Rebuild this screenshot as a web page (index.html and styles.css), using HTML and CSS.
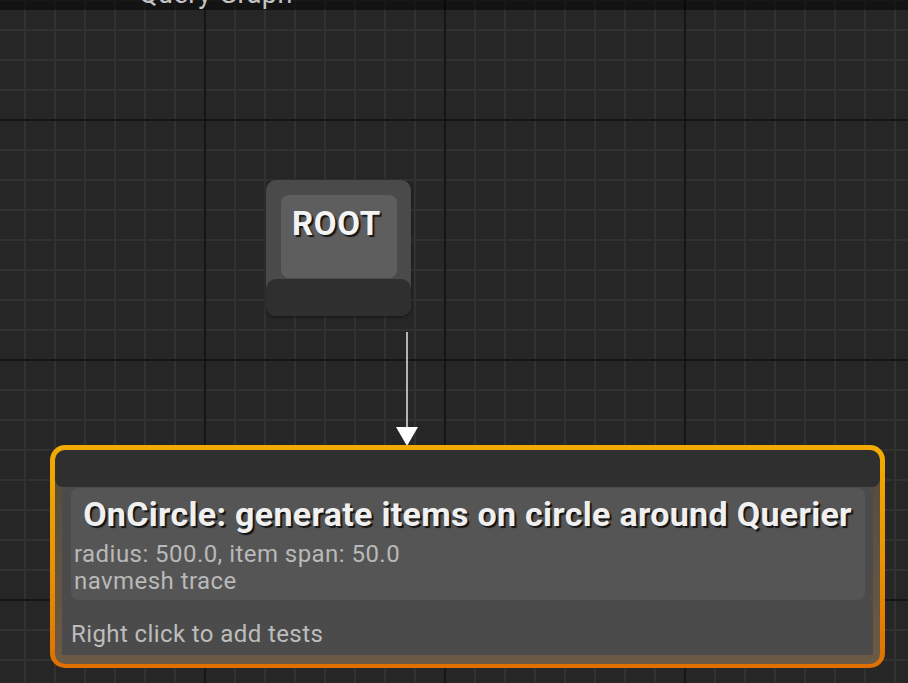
FILE: index.html
```html
<!DOCTYPE html>
<html>
<head>
<meta charset="utf-8">
<link rel="stylesheet" href="styles.css">
</head>
<body>
<div class="canvas">
  <div class="topbar"><span class="graph-title">Query Graph</span></div>

  <div class="node root-node">
    <div class="root-body"><span class="root-label">ROOT</span></div>
    <div class="root-pin"></div>
  </div>

  <svg class="wire" width="30" height="120" viewBox="0 0 30 120">
    <line x1="15" y1="0" x2="15" y2="100" stroke="#d8d8d8" stroke-width="1.6"/>
    <polygon points="4,95 26,95 15,114" fill="#ffffff"/>
  </svg>

  <div class="node gen-node">
    <div class="gen-inner">
      <div class="gen-header"></div>
      <div class="gen-body">
        <div class="gen-panel">
          <div class="gen-title">OnCircle: generate items on circle around Querier</div>
          <div class="gen-desc">radius: 500.0, item span: 50.0</div>
          <div class="gen-desc">navmesh trace</div>
        </div>
        <div class="gen-hint">Right click to add tests</div>
      </div>
    </div>
  </div>
</div>
</body>
</html>
```

FILE: styles.css
```css
html, body {
  margin: 0;
  padding: 0;
  height: 100%;
  overflow: hidden;
}

body {
  font-family: Roboto, "Liberation Sans", sans-serif;
}

.canvas {
  position: relative;
  width: 908px;
  height: 683px;
  overflow: hidden;
  background-color: #262626;
  background-image:
    linear-gradient(to right, #151515 0 2px, transparent 2px),
    linear-gradient(to bottom, #151515 0 2px, transparent 2px),
    linear-gradient(to right, #313131 0 2px, transparent 2px),
    linear-gradient(to bottom, #313131 0 2px, transparent 2px);
  background-size: 240px 100%, 100% 240px, 30px 100%, 100% 30px;
  background-position: 204px 0, 0 119px, 24px 0, 0 29px;
}

.topbar {
  height: 10px;
  background: rgba(0, 0, 0, 0.5);
  overflow: hidden;
}

.graph-title {
  display: block;
  margin-top: -19px;
  padding-left: 139px;
  font-size: 27px;
  line-height: 27px;
  letter-spacing: 0.5px;
  color: #c4c4c4;
}

.node {
  position: absolute;
}

/* ROOT node */
.root-node {
  left: 266px;
  top: 180px;
  width: 145px;
  height: 136px;
  border-radius: 10px;
  background: #4a4a4a;
  box-shadow: 0 1px 3px rgba(0, 0, 0, 0.5);
  display: flex;
  flex-direction: column;
  overflow: hidden;
}

.root-body {
  margin: 15px 14px 1px 15px;
  height: 83px;
  border-radius: 8px;
  background: #5e5e5e;
  text-align: center;
  padding: 12px 5px 0 0;
  box-sizing: border-box;
}

.root-label {
  font-size: 33px;
  line-height: 33px;
  font-weight: bold;
  color: #f4f4f4;
  text-shadow: 2px 2px 1px #161616;
  letter-spacing: 0.8px;
  white-space: nowrap;
}

.root-pin {
  flex: 1;
  background: #2f2f2f;
  border-radius: 10px 10px 0 0;
}

.wire {
  position: absolute;
  left: 392px;
  top: 332px;
}

/* Generator node */
.gen-node {
  left: 50px;
  top: 445px;
  width: 835px;
  height: 223px;
  box-sizing: border-box;
  padding: 5px 5px 4px 5px;
  border-radius: 15px;
  background: linear-gradient(to bottom, #f2ac00 0%, #eb9400 50%, #df6f00 100%);
}

.gen-inner {
  height: 100%;
  border-radius: 10px;
  background: linear-gradient(to bottom, #554b3b 0%, #6b5a45 100%);
  display: flex;
  flex-direction: column;
  overflow: hidden;
}

.gen-header {
  height: 37px;
  flex: none;
  background: #2f2f2f;
  border-radius: 10px 10px 8px 8px;
}

.gen-body {
  flex: 1;
  margin: 0 7px 9px 7px;
  background: #4b4b4b;
  padding: 1px 8px 0 9px;
}

.gen-panel {
  background: #555555;
  border-radius: 8px;
  padding: 9px 4px 5px 3px;
}

.gen-title {
  font-size: 34px;
  line-height: 34px;
  font-weight: bold;
  color: #f0f0f0;
  text-align: center;
  text-shadow: 2px 2px 1px #141414;
  margin-bottom: 10px;
  white-space: nowrap;
  letter-spacing: 0.3px;
}

.gen-desc {
  font-size: 24px;
  line-height: 27px;
  letter-spacing: 0.45px;
  color: #b9b9b9;
  white-space: nowrap;
}

.gen-hint {
  margin-top: 21px;
  font-size: 24px;
  line-height: 27px;
  letter-spacing: 0.4px;
  color: #bdbdbd;
  white-space: nowrap;
}
```
